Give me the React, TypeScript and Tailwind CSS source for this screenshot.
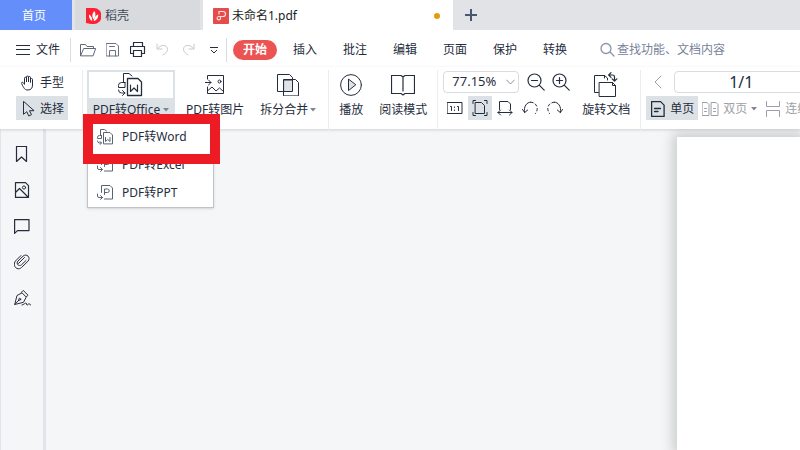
import type { ReactNode } from 'react';
import clsx from 'clsx';

interface IconProps {
  w: number;
  h: number;
  children: ReactNode;
  className?: string;
}

function Icon({ w, h, children, className }: IconProps) {
  return (
    <svg
      width={w}
      height={h}
      viewBox={`0 0 ${w} ${h}`}
      fill="none"
      stroke="currentColor"
      strokeWidth="1"
      strokeLinecap="round"
      strokeLinejoin="round"
      className={clsx('shrink-0', className)}
      aria-hidden="true"
    >
      {children}
    </svg>
  );
}

function Caret({ className }: { className?: string }) {
  return (
    <svg width="6" height="4" viewBox="0 0 6 4" className={clsx('shrink-0', className)} aria-hidden="true">
      <path d="M0 0h6L3 3.5z" fill="#7d8797" />
    </svg>
  );
}

function ConvertIcon() {
  return (
    <Icon w={26} h={24}>
      <path d="M9.500 22.500V5.500H20l3.500 3.500v13.500z" strokeWidth="1.300" />
      <path d="M12.500 12v6.500l3.500-3.500 3.500 3.500V12" strokeWidth="1.200" />
      <path d="M5.500 9.500V.5h5.500l3 2.500M7 9.500H3.500a3 3 0 0 0-3 3v2h6.500v-5M.5 17a3 3 0 0 0 3 3h3.500M4.500 17.500L7 20l-2.500 2.500" />
    </Icon>
  );
}

function SmallWordIcon() {
  return (
    <Icon w={16} h={16} className="text-[#5b6373]">
      <path d="M6.500 14.500v-11h6.500l2.500 2.500v8.500z" />
      <path d="M8.500 8.500v4l2.200-2 2.300 2v-4" />
      <path d="M3.500 6.500V.5h4l2 1.500M4.500 6.500h-2a2 2 0 0 0-2 2v1h4v-3M.5 12a2 2 0 0 0 2 2h2M3 12.500L4.500 14 3 15.500" />
    </Icon>
  );
}

function SmallPdfIcon() {
  return (
    <Icon w={16} h={16} className="text-[#5b6373]">
      <path d="M4.500 7.500v-7h8.500l2.500 2.500v11h-8" />
      <path d="M7.500 9.500v-5.500h3a1.700 1.700 0 0 1 0 3.500h-3" />
      <path d="M.5 9v2a1.500 1.500 0 0 0 1.500 1.500h3.500M3.500 10.500l2 2-2 2" />
    </Icon>
  );
}

function Divider() {
  return <span className="h-[60px] w-px shrink-0 bg-[#ebecef]" />;
}

const MENU = ['插入', '批注', '编辑', '页面', '保护', '转换'];

const CONVERT_ITEMS = [
  { label: 'PDF转Word', icon: <SmallWordIcon /> },
  { label: 'PDF转Excel', icon: <SmallPdfIcon /> },
  { label: 'PDF转PPT', icon: <SmallPdfIcon /> },
];

function TabBar() {
  return (
    <header className="flex h-[30px] shrink-0 bg-[#e2e3e7]">
      <button className="w-[72px] shrink-0 bg-[#648ffb] pt-0.5 pr-1 text-white">首页</button>
      <button className="ml-[3px] flex w-[125px] shrink-0 items-center gap-1 bg-[#d9dade] pt-0.5 pl-[11px] text-[#434b58]">
        <svg width="15" height="16" viewBox="0 0 15 16" aria-hidden="true">
          <path d="M0 0h8a7.500 8 0 0 1 0 16H5L0 15z" fill="#fb2233" />
          <path d="M8.200 3c2 2.500 1.500 6-.8 8.500C5.800 8.500 6 5.500 8.200 3z" fill="#fff" />
          <path d="M3 6.500c2 1 3.500 3.500 3.200 6.500C3.800 12 2.800 9.500 3 6.500z" fill="#fff" />
          <path d="M12.200 6.200c.3 3-1.200 6-4.400 6.800 0-3 1.500-5.500 4.400-6.800z" fill="#fff" />
        </svg>
        稻壳
      </button>
      <button className="ml-[3px] flex w-[250px] shrink-0 items-center bg-white pt-0.5 pr-[13px] pl-2.5 text-[#1a1d24]">
        <svg width="16" height="16" viewBox="0 0 16 16" fill="none" aria-hidden="true">
          <rect width="16" height="16" rx="1" fill="#e54c4a" />
          <path
            d="M6 6.500V3.500h4a2.500 2.500 0 0 1 0 5H5.700a1.700 1.700 0 1 0 1.800 1.700V8.500"
            stroke="#ffdede"
            strokeWidth="1.200"
          />
        </svg>
        <span className="ml-[3px]">未命名1.pdf</span>
        <span className="ml-auto size-1.5 rounded-full bg-[#e79b0b]" />
      </button>
      <button className="ml-3 text-[#4b5670]" aria-label="新建标签">
        <Icon w={12} h={12}>
          <path d="M6 0v12M0 6h12" strokeWidth="2" strokeLinecap="butt" />
        </Icon>
      </button>
    </header>
  );
}

function MenuBar() {
  return (
    <nav className="flex h-[37px] shrink-0 items-center bg-white pt-0.5 pl-4">
      <button className="flex items-center gap-1.5">
        <Icon w={14} h={12}>
          <path d="M0 1.500h14M0 5.500h14M0 10.500h14" strokeLinecap="butt" />
        </Icon>
        文件
      </button>
      <span className="ml-2.5 h-6 w-px shrink-0 bg-[#d9dce1]" />
      <div className="ml-[9px] flex shrink-0 items-center gap-2.5">
        <button aria-label="打开" className="text-[#5f6777]">
          <Icon w={16} h={14}>
            <path d="M.5 12.500V1.500h5l1.500 2h6.500v2M.7 12.500l3-7h12l-2.500 7z" />
          </Icon>
        </button>
        <button aria-label="保存" className="text-[#6b7382]">
          <Icon w={14} h={14}>
            <path d="M.5.5h9.500l2.500 2.500v10H.5zM3.500 13V7.500h6V13M3.500 3.500h5" />
          </Icon>
        </button>
        <button aria-label="打印">
          <Icon w={16} h={16}>
            <path d="M3.500 4.500v-4h9v4M3.500 11.500h-3v-7h14v7h-3M3.500 8.500h8v6h-8z" strokeWidth="1.200" />
          </Icon>
        </button>
        <button aria-label="撤销" className="text-[#c5c9cf]">
          <Icon w={13} h={13}>
            <path d="M1 1v5h5M1.500 5.500C4 1.500 11.500 1 11.500 6.500c0 2-2 4-4.500 5.500" />
          </Icon>
        </button>
        <button aria-label="重做" className="ml-[3px] text-[#c5c9cf]">
          <Icon w={13} h={13}>
            <path d="M12 1v5H7M11.500 5.500C9 1.500 1.500 1 1.500 6.500c0 2 2 4 4.500 5.500" />
          </Icon>
        </button>
        <button aria-label="更多" className="ml-[5px]">
          <Icon w={8} h={8}>
            <path d="M0 1.500h8M1 4l3 3 3-3" strokeLinecap="butt" />
          </Icon>
        </button>
      </div>
      <span className="ml-2 h-6 w-px shrink-0 bg-[#d9dce1]" />
      <button className="ml-1.5 h-5 w-11 shrink-0 rounded-full bg-[#eb5452] font-bold text-white">开始</button>
      <div className="ml-4 flex shrink-0 gap-[26px]">
        {MENU.map((label) => (
          <button key={label}>{label}</button>
        ))}
      </div>
      <label className="ml-[33px] flex min-w-0 flex-1 items-center gap-0.5 text-[#8c95a8]">
        <Icon w={15} h={15}>
          <path d="M11 6.500a5 5 0 1 1-10 0 5 5 0 0 1 10 0zM10 10l4 4" strokeWidth="1.300" />
        </Icon>
        <input
          type="text"
          aria-label="查找功能、文档内容"
          placeholder="查找功能、文档内容"
          className="min-w-0 flex-1 outline-none placeholder:text-[#78829a]"
        />
      </label>
    </nav>
  );
}

function ToolButton({ icon, label, className, caret }: { icon: ReactNode; label: string; className?: string; caret?: boolean }) {
  return (
    <button className={clsx('flex shrink-0 flex-col items-center', className)}>
      <span className="flex h-[30px] items-center">{icon}</span>
      <span className="flex h-5 items-center gap-0.5 whitespace-nowrap">
        {label}
        {caret && <Caret />}
      </span>
    </button>
  );
}

function ConvertMenu() {
  return (
    <div className="relative ml-1 h-[58px] w-[88px] shrink-0 bg-[#dce1e6]">
      <button className="flex w-full flex-col items-center p-0.5">
        <span className="flex h-[26px] w-full items-center justify-center bg-white">
          <ConvertIcon />
        </span>
        <span className="mt-0.5 flex h-5 items-center gap-[3px] whitespace-nowrap">
          PDF转Office
          <Caret />
        </span>
      </button>
      <div
        role="menu"
        className="absolute top-[50px] left-0 z-10 w-[127px] border border-[#bfc2c8] bg-white pt-0.5 shadow-sm"
      >
        {CONVERT_ITEMS.map((item) => (
          <button key={item.label} role="menuitem" className="flex h-7 w-full items-center gap-[9px] pl-[9px] whitespace-nowrap">
            {item.icon}
            {item.label}
          </button>
        ))}
      </div>
      {/* highlight frame around the Word entry */}
      <div className="pointer-events-none absolute top-11 -left-1 z-20 h-[50px] w-[137px] border-10 border-[#ed1c24]" />
    </div>
  );
}

function ZoomGroup() {
  return (
    <div className="ml-[5px] flex shrink-0 flex-col gap-[3px] pt-px">
      <div className="flex items-center">
        <div className="relative flex items-center">
          <select
            aria-label="缩放比例"
            className="h-[22px] w-[76px] appearance-none rounded-sm border border-[#d9dce0] bg-white pl-2 text-[13px] outline-none"
          >
            <option>77.15%</option>
          </select>
          <Icon w={9} h={6} className="pointer-events-none absolute right-1 text-[#8b929e]">
            <path d="M.7 1l3.800 4 3.800-4" />
          </Icon>
        </div>
        <button aria-label="缩小" className="ml-2">
          <Icon w={18} h={18}>
            <path d="M14 7.500a6.500 6.500 0 1 1-13 0 6.500 6.500 0 0 1 13 0zM12.200 12.200l5 5M4.500 7.500h6" strokeWidth="1.200" />
          </Icon>
        </button>
        <button aria-label="放大" className="ml-[7px]">
          <Icon w={18} h={18}>
            <path
              d="M14 7.500a6.500 6.500 0 1 1-13 0 6.500 6.500 0 0 1 13 0zM12.200 12.200l5 5M4.500 7.500h6M7.500 4.500v6"
              strokeWidth="1.200"
            />
          </Icon>
        </button>
      </div>
      <div className="flex h-6 items-center gap-px">
        <button aria-label="实际大小" className="flex size-6 items-center justify-center">
          <Icon w={16} h={14}>
            <path d="M.5 1.500h14.500v11H.5zM3.500 5.500h1v4M10.500 5.500h1v4M7.500 6v.5M7.500 9v.5" />
          </Icon>
        </button>
        <button aria-label="适合页面" className="flex size-6 items-center justify-center bg-[#dce1e6]">
          <Icon w={16} h={16}>
            <path d="M3.500 2.500H9.500l3 3v8h-9zM1 3.500v-3h2.500M12.500.5h2.500v3M1 12.500v3h2.500M12.500 15.500h2.500v-3" />
          </Icon>
        </button>
        <button aria-label="适合宽度" className="flex size-6 items-center justify-center">
          <Icon w={16} h={16}>
            <path d="M2.500 9.500V1.500H11l2.500 2.500v5.500M1 12.500h14M3.500 10L1 12.500 3.500 15M12.500 10l2.500 2.500-2.500 2.500" />
          </Icon>
        </button>
        <button aria-label="逆时针旋转" className="flex size-6 items-center justify-center">
          <Icon w={16} h={14}>
            <path d="M2.500 11.500C1.500 5 5 1.200 8.500 1.200" />
            <path d="M8.500 1.200C15 1.500 17 8 13.500 12.500" strokeDasharray="2.500 2.500" />
            <path d="M.5 8.500l2.200 3 3-2.500" />
          </Icon>
        </button>
        <button aria-label="顺时针旋转" className="flex size-6 items-center justify-center">
          <Icon w={16} h={14}>
            <path d="M13.500 11.500c1-6.500-2.500-10.300-6-10.300" />
            <path d="M7.500 1.200C1 1.500-1 8 2.500 12.500" strokeDasharray="2.500 2.500" />
            <path d="M15.500 8.500l-2.200 3-3-2.500" />
          </Icon>
        </button>
      </div>
    </div>
  );
}

function PageGroup() {
  return (
    <div className="ml-[5px] flex min-w-0 flex-1 flex-col gap-[3px] pt-px">
      <div className="flex items-center pl-2">
        <button aria-label="上一页" className="text-[#9a9fa8]">
          <Icon w={8} h={14}>
            <path d="M7 1L1 7l6 6" />
          </Icon>
        </button>
        <input
          type="text"
          aria-label="页码"
          defaultValue="1/1"
          className="ml-3 h-[22px] w-[134px] shrink-0 rounded-sm border border-[#d9dce0] bg-white text-center text-base outline-none"
        />
      </div>
      <div className="flex h-6 items-center whitespace-nowrap text-[#9c9fa5]">
        <button className="flex h-6 w-[52px] shrink-0 items-center gap-[5px] bg-[#dce1e6] pt-px pl-[5px] text-[#252d3c]">
          <Icon w={14} h={16}>
            <path d="M.6.6h9l3.500 3.500v11.300H.6zM3.500 7.500h6M3.500 10.500H7" strokeWidth="1.300" />
          </Icon>
          单页
        </button>
        <button className="ml-1 flex shrink-0 items-center gap-1 pt-px">
          <Icon w={17} h={16}>
            <path d="M.5 1.500H5l2 2v11H.5zM2.500 7.500h2M2.500 10.500h2M9.500 1.500H14l2 2v11H9.500zM11.500 7.500h2M11.500 10.500h2" />
          </Icon>
          双页
          <Caret />
        </button>
        <button className="ml-2 flex shrink-0 items-center gap-1 pt-px">
          <Icon w={16} h={16}>
            <path d="M1.500.5v5h13v-5M1.500 15.500v-6h13v6" />
          </Icon>
          连续阅读
        </button>
      </div>
    </div>
  );
}

function Toolbar() {
  return (
    <div className="relative z-10 flex h-[62px] shrink-0 bg-white pt-[3px] pl-4 shadow-[0_1px_3px_rgba(0,0,0,0.15)]">
      <div className="flex shrink-0 flex-col gap-0.5">
        <button className="flex h-6 w-[52px] items-center gap-1 pt-px pl-1">
          <Icon w={16} h={16}>
            <path d="M4.500 9V3.200a1 1 0 0 1 2 0V7 2a1 1 0 0 1 2 0v5-4.500a1 1 0 0 1 2 0V7.500 4.500a1 1 0 0 1 2 0V10c0 3-1.500 5-4.500 5S4.500 14 2.500 10.500L1.700 8.500c-.5-1.300 1-1.800 1.700-.8z" />
          </Icon>
          手型
        </button>
        <button className="flex h-6 w-[52px] items-center gap-1 bg-[#dce1e6] pt-px pl-1">
          <Icon w={16} h={16}>
            <path d="M3.500.7v12.600l3.300-2.600 2 4.300 2.700-1.300-2-4h4.200z" />
          </Icon>
          选择
        </button>
      </div>
      <span className="ml-3.5 h-[60px] w-px shrink-0 bg-[#ebecef]" />
      <ConvertMenu />
      <ToolButton
        className="ml-[11px]"
        label="PDF转图片"
        icon={
          <Icon w={20} h={20}>
            <path d="M2.500 4V.5h16v18h-16V12M0 7.500h6M3.500 5L6 7.500 3.500 10" />
            <path d="M3 15.500l4-3.500 4 4 3.500-3 4 3.500" />
            <path d="M16 6.500a1.500 1.500 0 1 1-3 0 1.500 1.500 0 0 1 3 0z" />
          </Icon>
        }
      />
      <ToolButton
        className="mr-3 ml-4"
        label="拆分合并"
        caret
        icon={
          <Icon w={22} h={22}>
            <path d="M15.500 5.500V3.500L12.500.5H.5v17h6" />
            <path d="M7 6h8.500v11.500H7z" fill="#dfe3e7" />
            <path d="M6.500 21.500v-16h12l3 3v13z" />
          </Icon>
        }
      />
      <Divider />
      <ToolButton
        className="ml-2.5"
        label="播放"
        icon={
          <Icon w={22} h={22}>
            <circle cx="11" cy="11" r="10.400" />
            <path d="M8.500 5.500v11l7-5.500z" fill="#dfe3e7" />
          </Icon>
        }
      />
      <ToolButton
        className="mr-2.5 ml-4"
        label="阅读模式"
        icon={
          <Icon w={24} h={22}>
            <path d="M.5 1.500h9.500l2 1.500 2-1.500h9.500v18H14l-2 1.500-2-1.500H.5zM12 3v14" strokeWidth="1.200" />
          </Icon>
        }
      />
      <Divider />
      <ZoomGroup />
      <ToolButton
        className="mr-2.5 ml-3"
        label="旋转文档"
        icon={
          <Icon w={24} h={26}>
            <path d="M13.500 8V6l-3-2.500H.5v17h4M10.500 3.500V6" />
            <path d="M5.500 10.500h13l3 3v11h-16zM18.500 10.500v3h3" />
            <path d="M15 3h3.500a2 2 0 0 1 2 2v4M17 .7L14.700 3 17 5.300M18.200 6.800l2.300 2.400 2.300-2.400" strokeWidth="1.200" />
          </Icon>
        }
      />
      <Divider />
      <PageGroup />
    </div>
  );
}

function SideBar() {
  return (
    <aside className="flex w-[46px] shrink-0 flex-col items-center gap-5 border-r-3 border-l border-[#e2e4e9] pt-[17px]">
      <button aria-label="书签">
        <Icon w={16} h={16}>
          <path d="M2.500.5h10v15l-5-4.500-5 4.500z" strokeWidth="1.200" />
        </Icon>
      </button>
      <button aria-label="缩略图">
        <Icon w={16} h={16}>
          <path d="M1.500.6h10l3 3v11.800h-13zM1.500 10.500l4-4 8.500 8.500" strokeWidth="1.200" />
          <circle cx="10" cy="5.500" r="1.600" />
        </Icon>
      </button>
      <button aria-label="批注">
        <Icon w={16} h={16}>
          <path d="M.6 1.600h14.400v11H3.500L.6 15.400z" strokeWidth="1.200" />
        </Icon>
      </button>
      <button aria-label="附件">
        <Icon w={16} h={16}>
          <path d="M7 1.500L1.700 6.800C-.8 9.500.5 13.500 3 14.500c1.800.6 3.200.2 4.500-1l6.500-6.300c3.200-3.700-1.500-8.200-5-5L4 7c-2.500 2.800 1 6 3.500 3.800L12 6.500M4.500 9.500l6-6" />
        </Icon>
      </button>
      <button aria-label="签名">
        <Icon w={17} h={16}>
          <path d="M9.500.7l4.500 4.500-1.800 1.800-4.500-4.500zM7.700 3L3 5.500.7 14.500l8.800-2.200L12 7.500M.9 14.300L5 10" />
          <circle cx="5.700" cy="9.300" r="1" />
          <path d="M8 15c2-.5 3-2 4-2s0 2 1.200 2 1-1.500 1.800-1.500.3 1.500 1.500 1.500" />
        </Icon>
      </button>
    </aside>
  );
}

export default function App() {
  return (
    <div className="flex h-screen flex-col overflow-hidden bg-[#f5f6f8] font-['Noto_Sans','Noto_Sans_CJK_SC',sans-serif] text-xs text-[#252d3c]">
      <TabBar />
      <MenuBar />
      <Toolbar />
      <main className="flex min-h-0 flex-1">
        <SideBar />
        <section className="flex flex-1 justify-end overflow-hidden pt-2">
          <div className="h-full w-[123px] bg-white shadow-[0_0_12px_4px_rgba(0,0,0,0.18)]" />
        </section>
      </main>
    </div>
  );
}
